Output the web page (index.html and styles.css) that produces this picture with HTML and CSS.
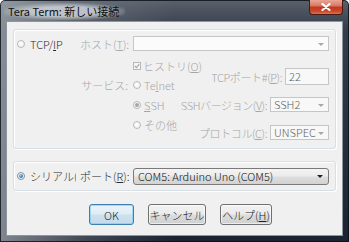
FILE: index.html
```html
<!DOCTYPE html>
<html lang="ja">
<head>
    <meta charset="UTF-8">
    <title>Tera Term: 新しい接続</title>
    <link rel="stylesheet" href="styles.css">
</head>
<body>

    <div class="window">
        <!-- Title bar -->
        <div class="titlebar">
            <span class="title">Tera Term: 新しい接続</span>
            <span class="close-btn">
                <svg width="10" height="8" viewBox="0 0 10 8"><path d="M1.5 1 L8.5 7 M8.5 1 L1.5 7" stroke="#fff" stroke-width="2.2" stroke-linecap="round"/></svg>
            </span>
        </div>

        <div class="client">
            <!-- TCP/IP group -->
            <div class="group group-tcp">
                <div class="host-row">
                    <div class="head"><span class="radio"></span><span class="head-text">TCP/<u>I</u>P</span></div>
                    <span class="label dis">ホスト(<u>T</u>):</span>
                    <span class="combo host-combo"></span>
                </div>
                <div class="lower">
                    <div class="label-col"><span class="label dis service-label">サービス:</span></div>
                    <div class="opt-col">
                        <div class="opt first dis"><span class="check"><svg width="6" height="6" viewBox="0 0 6 6"><path d="M0.8 3 L2.4 4.6 L5.2 1.2" fill="none" stroke="#a9a9a9" stroke-width="1.1"/></svg></span>ヒストリ(<u>O</u>)</div>
                        <div class="opt dis"><span class="radio"></span>Te<u>l</u>net</div>
                        <div class="opt dis"><span class="radio on"></span><u>S</u>SH</div>
                        <div class="opt dis"><span class="radio"></span>その他</div>
                    </div>
                    <div class="field-col">
                        <div class="frow port-row"><span class="dis flabel">TCPポート#(<u>P</u>):</span><span class="edit">22</span></div>
                        <div class="frow ver-row"><span class="dis flabel">SSHバージョン(<u>V</u>):</span><span class="combo small">SSH2</span></div>
                        <div class="frow proto-row"><span class="dis flabel">プロトコル(<u>C</u>):</span><span class="combo small">UNSPEC</span></div>
                    </div>
                </div>
            </div>

            <!-- Serial group -->
            <div class="group group-serial">
                <div class="head"><span class="radio on active"></span><span class="head-text serial-text">シリアル(<u>E</u>)</span></div>
                <span class="label">ポート(<u>R</u>):</span>
                <span class="combo port-combo">COM5: Arduino Uno (COM5)</span>
            </div>

            <!-- Buttons -->
            <div class="buttons">
                <button class="btn btn-default ok-btn">OK</button>
                <button class="btn cancel-btn">キャンセル</button>
                <button class="btn help-btn">ヘルプ(<u>H</u>)</button>
            </div>
        </div>
    </div>

</body>
</html>
```

FILE: styles.css
```css
body {
    margin: 0;
    font-family: "Noto Sans CJK JP", "Noto Sans", sans-serif;
    font-size: 11px;
    font-weight: 300;
    color: #2a2a2a;
    background-color: #ffffff;
}

u {
    text-decoration: underline;
    text-underline-offset: 1px;
}

/* Window frame */
.window {
    width: 349px;
    height: 242px;
    box-sizing: border-box;
    padding: 0 6px 6px 6px;
    display: flex;
    flex-direction: column;
    background:
        linear-gradient(to right, rgba(170, 177, 185, 0.7) 0, rgba(130, 138, 148, 0.35) 25%, rgba(40, 48, 60, 0) 50%),
        linear-gradient(to bottom, #58616c 0, #343d49 12%, #252e3a 60%, #1b2230 100%);
    box-shadow: inset 0 0 0 1px rgba(10, 14, 20, 0.8);
    border-radius: 5px 5px 0 0;
}

/* Title bar */
.titlebar {
    height: 21px;
    display: flex;
    align-items: flex-start;
    flex-shrink: 0;
}

.title {
    margin: 3px 0 0 -2px;
    padding: 1px 6px 2px 4px;
    line-height: 14px;
    font-size: 11px;
    font-weight: 400;
    color: #111;
    border-radius: 8px;
    background: radial-gradient(ellipse at center, rgba(205, 209, 214, 0.85) 40%, rgba(205, 209, 214, 0) 78%);
}

.close-btn {
    margin-left: auto;
    width: 34px;
    height: 15px;
    box-sizing: border-box;
    border: 1px solid #4a1a12;
    border-top: none;
    border-radius: 0 0 4px 4px;
    background: linear-gradient(to bottom, #e8a596 0, #d97b66 40%, #c2391f 52%, #c9472b 80%, #d9765a 100%);
    display: flex;
    align-items: center;
    justify-content: center;
}

/* Client area */
.client {
    flex: 1;
    background-color: #f0f0f0;
    border: 1px solid #8e959e;
    display: flex;
    flex-direction: column;
}

/* Group boxes */
.group {
    margin: 7px 6px 0 6px;
    box-sizing: border-box;
    border: 1px solid #d5dfe5;
    border-radius: 3px;
    box-shadow: inset 1px 1px 0 #ffffff, 1px 1px 0 #ffffff;
}

.group-tcp {
    height: 120px;
}

.group-serial {
    margin-top: 12px;
    height: 30px;
    display: flex;
    align-items: center;
    padding-right: 6px;
}

.head {
    width: 66px;
    box-sizing: border-box;
    padding-left: 3px;
    display: flex;
    align-items: center;
    flex-shrink: 0;
}

.head .radio {
    margin-right: 5px;
}

.head-text {
    white-space: nowrap;
    line-height: 14px;
}

.serial-text {
    width: 46px;
    overflow: hidden;
}

.label {
    width: 53px;
    box-sizing: border-box;
    padding-right: 5px;
    text-align: right;
    white-space: nowrap;
    flex-shrink: 0;
}

.dis {
    color: #a6a6a6;
}

.host-row {
    margin-top: 6px;
    height: 15px;
    display: flex;
    align-items: center;
    padding-right: 6px;
}

.lower {
    margin-top: 5px;
    display: flex;
}

.label-col {
    width: 119px;
    display: flex;
    justify-content: flex-end;
    flex-shrink: 0;
}

.service-label {
    margin-top: 19px;
    line-height: 20px;
    height: 20px;
}

.opt-col {
    width: 60px;
    display: flex;
    flex-direction: column;
    flex-shrink: 0;
}

.opt {
    height: 20px;
    display: flex;
    align-items: center;
    white-space: nowrap;
}

.opt.first {
    height: 19px;
}

.opt .radio {
    margin-right: 3px;
}

.field-col {
    flex: 1;
    min-width: 0;
    display: flex;
    flex-direction: column;
    align-items: flex-end;
    padding-right: 6px;
}

.frow {
    display: flex;
    align-items: center;
    gap: 3px;
    white-space: nowrap;
    flex-shrink: 0;
}

.flabel {
    letter-spacing: -0.4px;
}

.port-row {
    margin-top: 12px;
    height: 17px;
}

.ver-row {
    margin-top: 12px;
    height: 15px;
}

.proto-row {
    margin-top: 13px;
    height: 15px;
}

/* Radios and checkbox */
.radio {
    width: 8px;
    height: 8px;
    box-sizing: border-box;
    border: 1px solid #b8b8b8;
    border-radius: 50%;
    background: radial-gradient(circle at 40% 40%, #ffffff 0, #ececec 100%);
    display: inline-flex;
    align-items: center;
    justify-content: center;
    flex-shrink: 0;
}

.radio.on::after {
    content: "";
    width: 4px;
    height: 4px;
    border-radius: 50%;
    background-color: #a6a6a6;
}

.radio.active {
    border-color: #8a8f96;
}

.radio.active::after {
    background: radial-gradient(circle at 35% 35%, #8fd0f5 0, #2a7fc4 60%, #1a5a99 100%);
}

.check {
    width: 8px;
    height: 8px;
    box-sizing: border-box;
    border: 1px solid #b8b8b8;
    background-color: #f6f6f6;
    margin-right: 2px;
    display: inline-flex;
    align-items: center;
    justify-content: center;
    flex-shrink: 0;
}

/* Inputs */
.combo {
    position: relative;
    box-sizing: border-box;
    border: 1px solid #c6c6c6;
    background-color: #f8f8f8;
    color: #5f5f5f;
    padding: 0 12px 0 3px;
    line-height: 13px;
    white-space: nowrap;
    overflow: hidden;
    flex-shrink: 0;
}

.combo::after {
    content: "";
    position: absolute;
    right: 4px;
    top: 50%;
    margin-top: -1px;
    border-left: 3px solid transparent;
    border-right: 3px solid transparent;
    border-top: 3px solid #a8a8a8;
}

.host-combo {
    flex: 1;
    height: 15px;
    background-color: #fbfbfb;
}

.combo.small {
    width: 59px;
    height: 15px;
    padding-right: 9px;
}

.edit {
    width: 44px;
    height: 17px;
    box-sizing: border-box;
    border: 1px solid #c6c6c6;
    background-color: #f8f8f8;
    color: #5f5f5f;
    padding-left: 3px;
    line-height: 15px;
    flex-shrink: 0;
}

.port-combo {
    flex: 1;
    height: 17px;
    line-height: 15px;
    padding-left: 4px;
    border-color: #7a7a7a;
    border-radius: 3px;
    color: #111;
    background: linear-gradient(to bottom, #f4f4f4 0, #ebebeb 48%, #dedede 52%, #d2d2d2 100%);
}

.port-combo::after {
    border-top-color: #222;
    right: 5px;
}

/* Buttons */
.buttons {
    margin-top: 13px;
    padding-left: 82px;
    display: flex;
    gap: 14px;
}

.btn {
    height: 21px;
    box-sizing: border-box;
    padding: 0;
    font-family: inherit;
    font-size: 11px;
    font-weight: 300;
    color: #1e1e1e;
    border: 1px solid #707070;
    border-radius: 3px;
    background: linear-gradient(to bottom, #f2f2f2 0, #ebebeb 48%, #dddddd 52%, #cfcfcf 100%);
    box-shadow: inset 0 0 0 1px rgba(255, 255, 255, 0.6);
    white-space: nowrap;
}

.btn-default {
    border-color: #3c7fb1;
    background: linear-gradient(to bottom, #eaf3f9 0, #dfecf5 48%, #cde1ee 52%, #c3dbeb 100%);
    box-shadow: inset 0 0 0 1px rgba(120, 200, 240, 0.6);
}

.ok-btn {
    width: 45px;
}

.cancel-btn {
    width: 58px;
}

.help-btn {
    width: 52px;
}
```
